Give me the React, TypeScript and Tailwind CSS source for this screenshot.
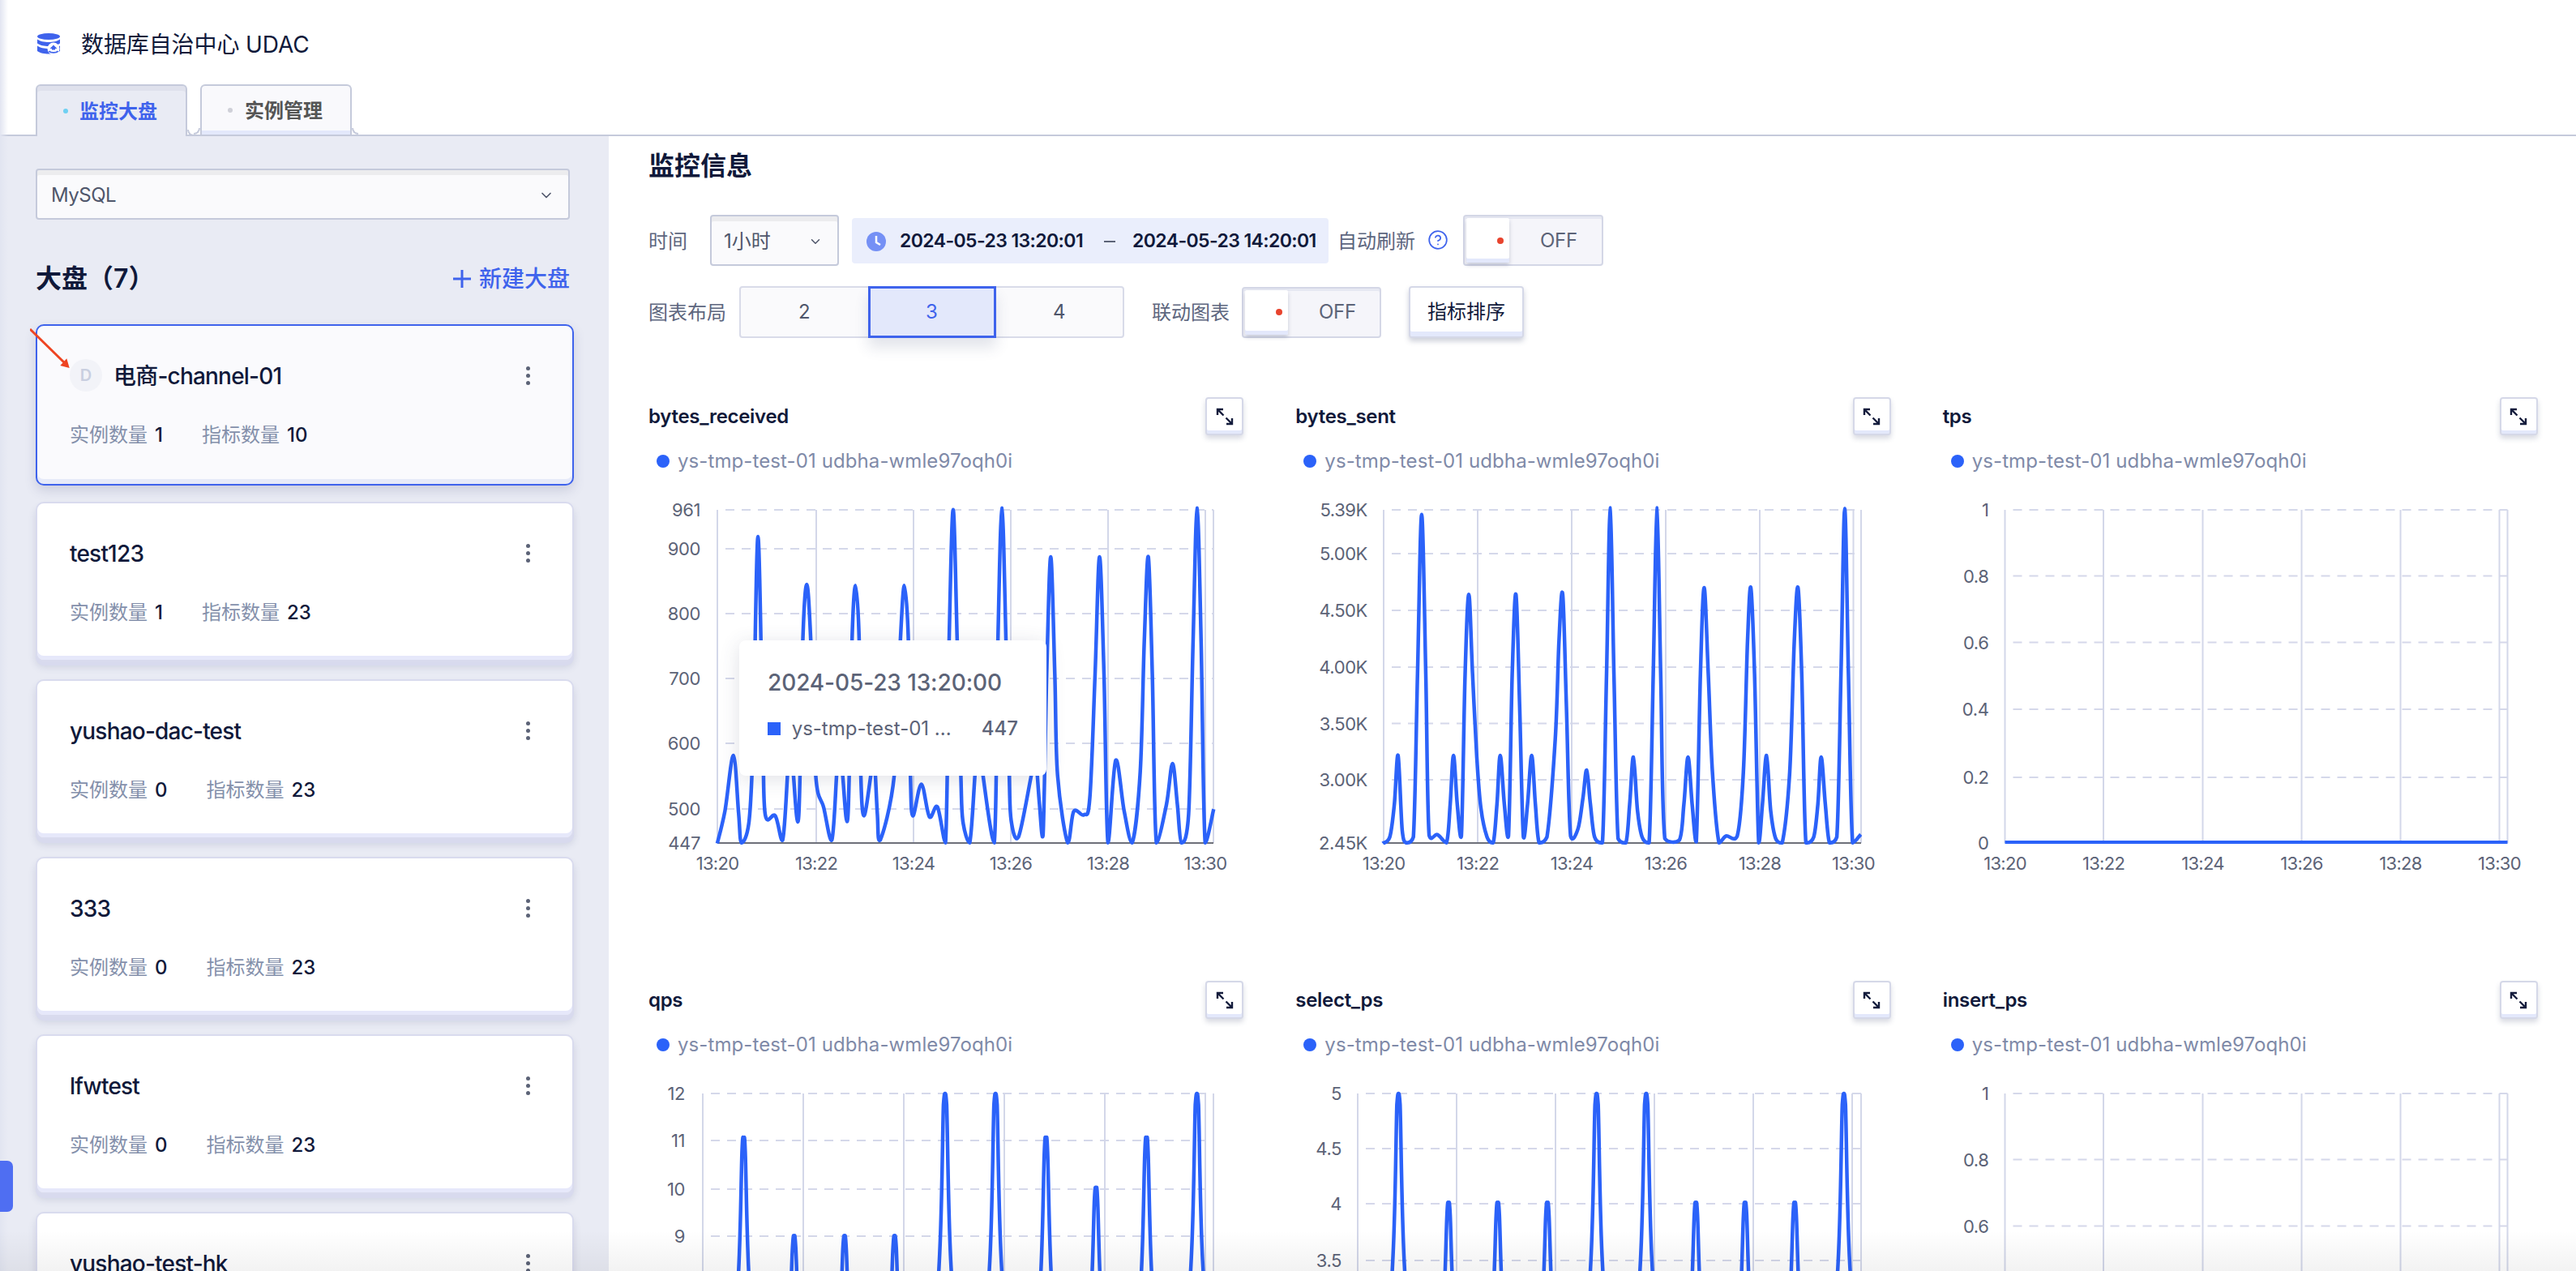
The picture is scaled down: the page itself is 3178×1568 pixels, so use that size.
import React from "react";
import { ChevronDown, CircleHelp } from "lucide-react";

type P = [number, number];
const BLUE = "#2b62f9";

function smooth(pts: P[], minY: number, maxY: number) {
  let d = `M${pts[0][0].toFixed(1)} ${pts[0][1].toFixed(1)}`;
  const cl = (v: number) => Math.min(maxY, Math.max(minY, v));
  for (let i = 0; i < pts.length - 1; i++) {
    const p0 = pts[Math.max(0, i - 1)];
    const p1 = pts[i];
    const p2 = pts[i + 1];
    const p3 = pts[Math.min(pts.length - 1, i + 2)];
    const c1x = p1[0] + (p2[0] - p0[0]) / 6;
    const c1y = cl(p1[1] + (p2[1] - p0[1]) / 6);
    const c2x = p2[0] - (p3[0] - p1[0]) / 6;
    const c2y = cl(p2[1] - (p3[1] - p1[1]) / 6);
    d += `C${c1x.toFixed(1)} ${c1y.toFixed(1)} ${c2x.toFixed(1)} ${c2y.toFixed(1)} ${p2[0].toFixed(1)} ${p2[1].toFixed(1)}`;
  }
  return d;
}

const TICKS = ["13:20", "13:22", "13:24", "13:26", "13:28", "13:30"];

function ExpandIcon() {
  return (
    <svg width="22" height="22" viewBox="0 0 22 22" fill="none" stroke="#141c3c" strokeWidth="2.4">
      <path d="M2 9V2h7M2 2l7.5 7.5M20 13v7h-7M20 20l-7.5-7.5" />
    </svg>
  );
}

type ChartProps = {
  title: string;
  axis: number;
  ticks: number[];
  end: number;
  yLabelX: number;
  grid: [number, string][];
  base: number;
  baseColor?: string;
  line?: P[];
  flat?: boolean;
  tooltip?: boolean;
  cut?: boolean;
};

function Chart({ title, axis, ticks, end, yLabelX, grid, base, baseColor, line, flat, tooltip, cut }: ChartProps) {
  return (
    <div className="relative h-[592px]">
      <div className="flex h-[47px] items-center justify-between">
        <div className="text-[24px] font-semibold tracking-[-0.3px] text-[#10193a]">{title}</div>
        <button className="flex h-[47px] w-[47px] items-center justify-center rounded-[4px] border-2 border-[#d5d8e8] bg-white shadow-[inset_0_-4px_0_#e3e8fb,0_4px_6px_rgba(60,70,110,0.2)]">
          <ExpandIcon />
        </button>
      </div>
      <div className="ml-[10px] mt-[16px] flex h-[32px] items-center">
        <span className="h-[16px] w-[16px] rounded-full bg-[#2b62f9]" />
        <span className="ml-[10px] text-[24px] tracking-[0.1px] whitespace-nowrap text-[#7f8aa8]">ys-tmp-test-01 udbha-wmle97oqh0i</span>
      </div>
      <svg width="734" height="480" viewBox="0 0 734 480" className="absolute left-0 top-[110px] overflow-visible font-[Inter,sans-serif]">
        {grid.map(([y, label]) => (
          <g key={label}>
            {y !== base && <line x1={axis + 10} x2={end} y1={y} y2={y} stroke="#d5d8ea" strokeWidth="2" strokeDasharray="11 9" />}
            {(!cut || y < 240) && (
              <text x={yLabelX} y={y} textAnchor="end" dominantBaseline="central" fontSize="22" letterSpacing="-0.4" fill="#5c6377">{label}</text>
            )}
          </g>
        ))}
        {[...ticks, end].map((x) => (
          <line key={x} x1={x} x2={x} y1={grid[0][0]} y2={base} stroke="#d3d7e9" strokeWidth="2" />
        ))}
        {baseColor && <line x1={axis} x2={end} y1={base} y2={base} stroke={baseColor} strokeWidth="2" />}
        {!cut && ticks.map((x, i) => (
          <text key={x} x={x} y={base + 25} textAnchor="middle" dominantBaseline="central" fontSize="22" letterSpacing="-0.7" fill="#5c6377">{TICKS[i]}</text>
        ))}
        {line && <path d={smooth(line, grid[0][0] - 1, base)} fill="none" stroke={BLUE} strokeWidth="4.5" strokeLinejoin="round" />}
        {flat && <line x1={axis} x2={end} y1={base - 1} y2={base - 1} stroke={BLUE} strokeWidth="4" />}
      </svg>
      {tooltip && (
        <div className="absolute left-[112px] top-[300px] h-[167px] w-[379px] rounded-[8px] bg-white px-[35px] pt-[34px] shadow-[0_4px_24px_rgba(60,70,100,0.16)]">
          <div className="text-[28px] leading-[36px] font-medium tracking-[-0.1px] text-[#5c6377]">2024-05-23 13:20:00</div>
          <div className="mt-[23px] flex h-[32px] items-center text-[24px] text-[#5c6377]">
            <span className="h-[16px] w-[16px] bg-[#2b62f9]" />
            <span className="ml-[14px] w-[239px] whitespace-nowrap">ys-tmp-test-01 ...</span>
            <span className="font-medium">447</span>
          </div>
        </div>
      )}
    </div>
  );
}

const c1 = (pts: P[]): P[] => pts.map(([x, y]) => [x / 2.0103 + 770 - 800, y / 2.489 + 470 - 600]);
const c2 = (pts: P[]): P[] => pts.map(([x, y]) => [x / 1.96 + 1560 - 1599, y / 2.489 + 470 - 600]);

const line1 = c1([
  [231, 1420], [250, 1320], [271, 1150], [284, 1330], [291, 1418], [310, 1350], [320, 1100], [332, 478], [344, 1100], [350, 1332], [375, 1335], [393, 1410], [405, 1210], [412, 1000], [420, 1210], [433, 1335], [443, 800], [453, 625], [463, 800], [475, 1210], [495, 1310], [515, 1410], [527, 1210], [534, 1050], [542, 1210], [555, 1335], [565, 800], [574, 628], [583, 800], [587, 1210], [595, 1335], [612, 1210], [620, 1150], [628, 1330], [635, 1410], [670, 1210], [685, 800], [695, 628], [705, 800], [710, 1210], [716, 1335], [737, 1238], [757, 1338], [777, 1308], [797, 1418], [806, 800], [816, 395], [826, 800], [835, 1210], [840, 1350], [857, 1418], [870, 1210], [878, 1050], [890, 1210], [918, 1418], [927, 800], [937, 390], [947, 800], [955, 1210], [960, 1350], [978, 1400], [1010, 1210], [1020, 1150], [1030, 1300], [1039, 1395], [1048, 900], [1058, 540], [1068, 900], [1075, 1210], [1100, 1418], [1115, 1322], [1140, 1332], [1155, 1280], [1168, 900], [1179, 540], [1190, 900], [1200, 1418], [1219, 1165], [1240, 1320], [1260, 1418], [1280, 1200], [1290, 800], [1300, 540], [1310, 900], [1320, 1418], [1345, 1300], [1360, 1175], [1372, 1300], [1382, 1418], [1400, 1330], [1411, 800], [1421, 390], [1431, 800], [1441, 1418], [1462, 1315],
]);

const line2 = c2([
  [288, 1420], [305, 1400], [316, 1300], [325, 1150], [335, 1380], [345, 1418], [362, 1400], [372, 900], [382, 410], [392, 900], [400, 1395], [420, 1393], [442, 1418], [451, 1300], [459, 1150], [468, 1300], [478, 1397], [487, 900], [496, 655], [505, 900], [515, 1150], [525, 1310], [540, 1400], [555, 1418], [564, 1300], [572, 1150], [582, 1300], [592, 1397], [601, 900], [610, 655], [619, 1000], [628, 1400], [638, 1300], [648, 1150], [657, 1300], [666, 1418], [685, 1400], [705, 1100], [714, 800], [723, 655], [732, 1000], [742, 1397], [760, 1375], [772, 1280], [781, 1195], [790, 1300], [800, 1400], [819, 1418], [829, 900], [838, 390], [847, 900], [857, 1405], [876, 1418], [885, 1300], [894, 1155], [904, 1320], [915, 1400], [932, 1418], [942, 900], [951, 390], [960, 900], [970, 1405], [1005, 1410], [1016, 1300], [1026, 1155], [1036, 1300], [1046, 1415], [1056, 900], [1065, 635], [1075, 900], [1085, 1200], [1101, 1418], [1118, 1397], [1145, 1397], [1160, 1200], [1170, 800], [1178, 635], [1187, 900], [1197, 1418], [1206, 1300], [1216, 1150], [1226, 1320], [1238, 1405], [1254, 1418], [1272, 1200], [1283, 800], [1292, 635], [1301, 900], [1311, 1418], [1330, 1400], [1340, 1300], [1348, 1155], [1358, 1300], [1368, 1418], [1386, 1400], [1396, 900], [1405, 392], [1414, 900], [1424, 1418], [1444, 1392],
]);

function spikes(list: [number, number][], base: number): P[] {
  const out: P[] = [];
  list.forEach(([x, top], i) => {
    const mid = (top + base) / 2;
    if (i === 0) out.push([x - 40, base]);
    out.push([x - 22, base], [x - 7, mid], [x - 2, top + 14], [x, top], [x + 2, top + 14], [x + 7, mid], [x + 22, base]);
  });
  return out;
}

const qx = (z: number) => z / 1.96 + 770 - 800;
const sx = (z: number) => z / 1.96 + 1560 - 1599;
const qv: Record<number, number> = { 12: 29, 11: 87, 10: 147, 9: 205 };
const sv: Record<number, number> = { 5: 29, 4: 165 };
const line4 = spikes(([[289, 11], [411, 9], [533, 9], [654, 9], [776, 12], [898, 12], [1020, 11], [1141, 10], [1263, 11], [1385, 12]] as P[]).map(([x, v]) => [qx(x), qv[v]] as P), 440);
const line5 = spikes(([[326, 5], [447, 4], [566, 4], [686, 4], [805, 5], [925, 5], [1045, 4], [1164, 4], [1284, 4], [1403, 5]] as P[]).map(([x, v]) => [sx(x), sv[v]] as P), 440);

const tpsGrid: [number, string][] = [[29, "1"], [110.6, "0.8"], [192.5, "0.6"], [275, "0.4"], [359, "0.2"], [440, "0"]];

function Card({ name, inst, metric, active, avatar, cut }: { name: string; inst: number; metric: number; active?: boolean; avatar?: boolean; cut?: boolean }) {
  return (
    <div
      className={
        active
          ? "relative h-[199px] w-[664px] shrink-0 rounded-[10px] border-2 border-[#3f63ec] bg-[#fafafd] pl-[40px] pr-[52px] pt-[41px] shadow-[inset_0_-6px_0_#e6eaf9,0_6px_14px_rgba(70,80,130,0.18)]"
          : "relative h-[197px] w-[664px] shrink-0 rounded-[10px] border-2 border-[#d9dbee] bg-white pl-[40px] pr-[52px] pt-[41px] shadow-[inset_0_-5px_0_#e6e8fa,0_5px_0_#d8daee,0_7px_10px_rgba(70,80,130,0.16)]"
      }
    >
      <div className="flex h-[40px] items-center justify-between">
        <div className="flex items-center">
          {avatar && (
            <span className="mr-[14px] flex h-[40px] w-[40px] items-center justify-center rounded-full bg-[#f2f3f8] text-[20px] font-semibold text-[#c9cfe0]">D</span>
          )}
          <span className="pt-[1px] text-[28px] font-medium tracking-[-0.8px] whitespace-nowrap text-[#10193a]">{name}</span>
        </div>
        <div className="flex flex-col gap-[4px]">
          <span className="h-[5px] w-[5px] rounded-full bg-[#5c6377]" />
          <span className="h-[5px] w-[5px] rounded-full bg-[#5c6377]" />
          <span className="h-[5px] w-[5px] rounded-full bg-[#5c6377]" />
        </div>
      </div>
      {!cut && (
        <div className="mt-[38px] flex h-[32px] items-center text-[24px]">
          <span className="text-[#8490ab]">实例数量</span>
          <span className="ml-[9px] font-medium text-[#10193a]">{inst}</span>
          <span className="ml-[48px] text-[#8490ab]">指标数量</span>
          <span className="ml-[9px] font-medium text-[#10193a]">{metric}</span>
        </div>
      )}
    </div>
  );
}

function Toggle({ width }: { width: string }) {
  return (
    <div className={`${width} flex h-[63px] items-stretch rounded-[4px] border-2 border-[#d4d7e6] bg-[#f5f5fa] p-[2px] shadow-[inset_0_3px_0_#e6e8f2]`}>
      <div className="flex w-[53px] items-center justify-end rounded-[2px] bg-white pr-[7px] shadow-[inset_0_-5px_0_#e3e8fb,0_3px_5px_rgba(60,70,110,0.25)]">
        <span className="h-[8px] w-[8px] rounded-full bg-[#e8442e]" />
      </div>
      <span className="ml-[38px] self-center text-[24px] tracking-[-0.3px] text-[#5c6377]">OFF</span>
    </div>
  );
}

export default function App() {
  const rows: ChartProps[] = [
    {
      title: "bytes_received", axis: 85, ticks: [85, 207, 327, 447, 567, 687], end: 697, yLabelX: 64,
      grid: [[29, "961"], [77, "900"], [157, "800"], [237, "700"], [317, "600"], [398, "500"], [440, "447"]],
      base: 440, baseColor: "#6e7079", line: line1, tooltip: true,
    },
    {
      title: "bytes_sent", axis: 109, ticks: [109, 225, 341, 457, 573, 688.5], end: 698, yLabelX: 89,
      grid: [[29, "5.39K"], [83, "5.00K"], [153, "4.50K"], [223, "4.00K"], [292.5, "3.50K"], [362, "3.00K"], [440, "2.45K"]],
      base: 440, baseColor: "#6e7079", line: line2,
    },
    {
      title: "tps", axis: 76.5, ticks: [76.5, 198, 320.5, 442.5, 564.5, 686.5], end: 696.5, yLabelX: 56.5,
      grid: tpsGrid, base: 440, flat: true,
    },
    {
      title: "qps", axis: 67, ticks: [67, 191, 315, 439, 563, 687], end: 697, yLabelX: 45,
      grid: [[29, "12"], [87, "11"], [147, "10"], [205, "9"], [264, "8"], [322, "7"], [381, "6"], [440, "5"]],
      base: 440, baseColor: "#6e7079", line: line4, cut: true,
    },
    {
      title: "select_ps", axis: 77, ticks: [77, 199, 321, 443, 565, 687], end: 698, yLabelX: 57,
      grid: [[29, "5"], [97, "4.5"], [165, "4"], [235, "3.5"], [303, "3"], [371, "2.5"], [440, "2"]],
      base: 440, baseColor: "#6e7079", line: line5, cut: true,
    },
    {
      title: "insert_ps", axis: 76.5, ticks: [76.5, 198, 320.5, 442.5, 564.5, 686.5], end: 696.5, yLabelX: 56.5,
      grid: tpsGrid, base: 440, flat: true, cut: true,
    },
  ];

  return (
    <div className="relative flex h-screen w-full flex-col overflow-hidden bg-white font-[Inter,'Noto_Sans_CJK_SC',sans-serif] text-[#10193a]">
      <header className="relative h-[168px] shrink-0 border-b-2 border-[#c5cadb] pl-[44px]">
        <div className="flex h-[104px] items-start pt-[39px]">
          <svg width="28" height="26" viewBox="0 0 28 26" className="ml-[2px] mt-[2px]">
            <ellipse cx="14" cy="4" rx="14" ry="4" fill="#3f63ec" />
            <path d="M0 7.5c3 2.5 9 3.5 14 3.5s11-1 14-3.5v5c-3 2.5-9 3.5-14 3.5s-11-1-14-3.5z" fill="#3f63ec" />
            <path d="M0 15.5c3 2.5 9 3.5 14 3.5s11-1 14-3.5V22c-3 2.5-9 3.5-14 3.5S3 24.500 0 22z" fill="#3f63ec" />
            <circle cx="20" cy="19" r="7.500" fill="#fff" />
            <path d="M20 14.500l4.500 4.500h-2.500v1.500h-4V19h-2.500z" fill="#3f63ec" />
            <path d="M14.500 22c2 2.500 9 2.500 11 0" fill="none" stroke="#3f63ec" strokeWidth="1.800" />
          </svg>
          <span className="ml-[26px] text-[28px] leading-[32px] tracking-[-0.1px] whitespace-nowrap">数据库自治中心 UDAC</span>
        </div>
        <div className="flex items-start gap-[16px]">
          <div className="relative z-10 flex h-[64px] w-[187px] items-center rounded-t-[6px] border-2 border-b-0 border-[#c5cadb] bg-[#e9ebf4] pl-[32px] shadow-[inset_0_6px_0_#dfe1ec]">
            <span className="h-[6px] w-[6px] rounded-full bg-[#6fd0f2]" />
            <span className="ml-[14px] pt-[2px] text-[24px] font-semibold text-[#3f63ec]">监控大盘</span>
            <span className="absolute -right-[10px] bottom-0 h-[8px] w-[8px] rounded-bl-[8px] border-b-2 border-l-2 border-[#c5cadb]" />
          </div>
          <div className="relative z-10 flex h-[62px] w-[187px] items-center rounded-t-[6px] border-2 border-b-0 border-[#c5cadb] bg-[#f9f9fc] pl-[32px] shadow-[inset_0_-5px_0_#e3e8fb]">
            <span className="h-[6px] w-[6px] rounded-full bg-[#cfd0d8]" />
            <span className="ml-[15px] pt-[2px] text-[24px] font-semibold text-[#555555]">实例管理</span>
            <span className="absolute -left-[10px] bottom-0 h-[8px] w-[8px] rounded-br-[8px] border-b-2 border-r-2 border-[#c5cadb]" />
            <span className="absolute -right-[10px] bottom-0 h-[8px] w-[8px] rounded-bl-[8px] border-b-2 border-l-2 border-[#c5cadb]" />
          </div>
        </div>
      </header>

      <div className="flex min-h-0 flex-1">
        <aside className="w-[751px] shrink-0 overflow-hidden bg-[#e9ebf4] pl-[44px] pt-[40px]">
          <div className="flex h-[63px] w-[659px] items-center justify-between rounded-[4px] border-2 border-[#c5cadb] bg-[#fafafc] pl-[17px] pr-[17px] pt-[2px] shadow-[inset_0_6px_0_#ececee]">
            <span className="text-[24px] tracking-[-0.5px] text-[#4f566b]">MySQL</span>
            <ChevronDown size={20} strokeWidth={2} color="#4f566b" />
          </div>
          <div className="mt-[53px] flex h-[40px] w-[659px] items-center justify-between">
            <span className="text-[32px] font-semibold whitespace-nowrap">大盘（7）</span>
            <span className="flex items-center text-[28px] font-medium text-[#3f63ec]">
              <svg width="24" height="24" viewBox="0 0 24 24" stroke="#3f63ec" strokeWidth="3" className="mr-[9px]">
                <path d="M12 1v22M1 12h22" />
              </svg>
              新建大盘
            </span>
          </div>
          <div className="mt-[36px] flex flex-col gap-[22px]">
            <div className="-mb-[2px]">
              <Card name="电商-channel-01" inst={1} metric={10} active avatar />
            </div>
            <Card name="test123" inst={1} metric={23} />
            <Card name="yushao-dac-test" inst={0} metric={23} />
            <Card name="333" inst={0} metric={23} />
            <Card name="lfwtest" inst={0} metric={23} />
            <Card name="yushao-test-hk" inst={0} metric={23} cut />
          </div>
        </aside>

        <main className="min-w-0 flex-1 overflow-hidden pl-[49px] pr-[47px] pt-[15px]">
          <h1 className="h-[44px] text-[32px] leading-[44px] font-semibold">监控信息</h1>

          <div className="mt-[38px] flex h-[63px] items-center text-[24px] text-[#5d667e]">
            <span className="pt-[2px]">时间</span>
            <div className="ml-[28px] flex h-[63px] w-[159px] items-center justify-between rounded-[4px] border-2 border-[#c5cadb] bg-[#fafafc] pl-[15px] pr-[18px] pt-[2px] shadow-[inset_0_6px_0_#ececee]">
              <span className="text-[#4f566b]">1小时</span>
              <ChevronDown size={18} strokeWidth={2} color="#4f566b" />
            </div>
            <div className="ml-[16px] flex h-[56px] w-[588px] items-center rounded-[4px] bg-[#eaeefc] pl-[18px] pt-[2px] text-[23px] font-semibold tracking-[-0.6px] text-[#10193a]">
              <svg width="24" height="24" viewBox="0 0 24 24">
                <circle cx="12" cy="12" r="12" fill="#7590f5" />
                <path d="M12 5v8l5 3" fill="none" stroke="#fff" strokeWidth="2.500" />
              </svg>
              <span className="ml-[17px] w-[225px] whitespace-nowrap">2024-05-23 13:20:01</span>
              <span className="ml-[27px] h-[2px] w-[14px] bg-[#5c6377]" />
              <span className="ml-[21px] w-[225px] whitespace-nowrap">2024-05-23 14:20:01</span>
            </div>
            <span className="ml-[11px] pt-[2px]">自动刷新</span>
            <CircleHelp size={26} strokeWidth={1.6} color="#3f63ec" className="ml-[15px] mb-[2px]" />
            <div className="ml-[18px]">
              <Toggle width="w-[173px]" />
            </div>
          </div>

          <div className="mt-[25px] flex h-[64px] items-center text-[24px] text-[#5d667e]">
            <span className="pt-[2px]">图表布局</span>
            <div className="ml-[16px] flex h-[64px] w-[475px] items-stretch rounded-[4px] border-2 border-[#d9dbe9] bg-[#fafafc] text-[#4f566b]">
              <span className="flex flex-1 items-center justify-center">2</span>
              <span className="-my-[2px] flex w-[158px] items-center justify-center border-[3px] border-[#3f63ec] bg-[#e3e8fb] text-[#3f63ec] shadow-[0_12px_16px_rgba(60,70,110,0.14)]">3</span>
              <span className="flex flex-1 items-center justify-center">4</span>
            </div>
            <span className="ml-[34px] pt-[2px]">联动图表</span>
            <div className="ml-[15px]">
              <Toggle width="w-[172px]" />
            </div>
            <button className="ml-[34px] h-[64px] w-[142px] rounded-[4px] border-2 border-[#d5d8e8] bg-white text-[#10193a] shadow-[inset_0_-6px_0_#e3e8fb,0_4px_6px_rgba(60,70,110,0.25)]">指标排序</button>
          </div>

          <div className="mt-[73px] grid grid-cols-3 gap-x-[64px] gap-y-[128px]">
            {rows.map((r) => (
              <Chart key={r.title} {...r} />
            ))}
          </div>
        </main>
      </div>

      <svg width="60" height="60" viewBox="37 404 60 60" className="absolute left-[37px] top-[404px]">
        <path d="M37 406L80 448" stroke="#ee4422" strokeWidth="3" fill="none" />
        <path d="M85.700 454L74.300 451L82.300 442.300z" fill="#ee4422" />
      </svg>

      <div className="pointer-events-none absolute inset-y-0 left-0 w-[10px] bg-linear-to-r from-[#e2e5f1] to-transparent" />
      <div className="absolute left-0 top-[1432px] h-[63px] w-[16px] rounded-r-[7px] bg-[#4f6ef2]" />
      <div className="pointer-events-none absolute inset-x-0 bottom-0 h-[50px] bg-linear-to-b from-transparent to-black/5" />
    </div>
  );
}
